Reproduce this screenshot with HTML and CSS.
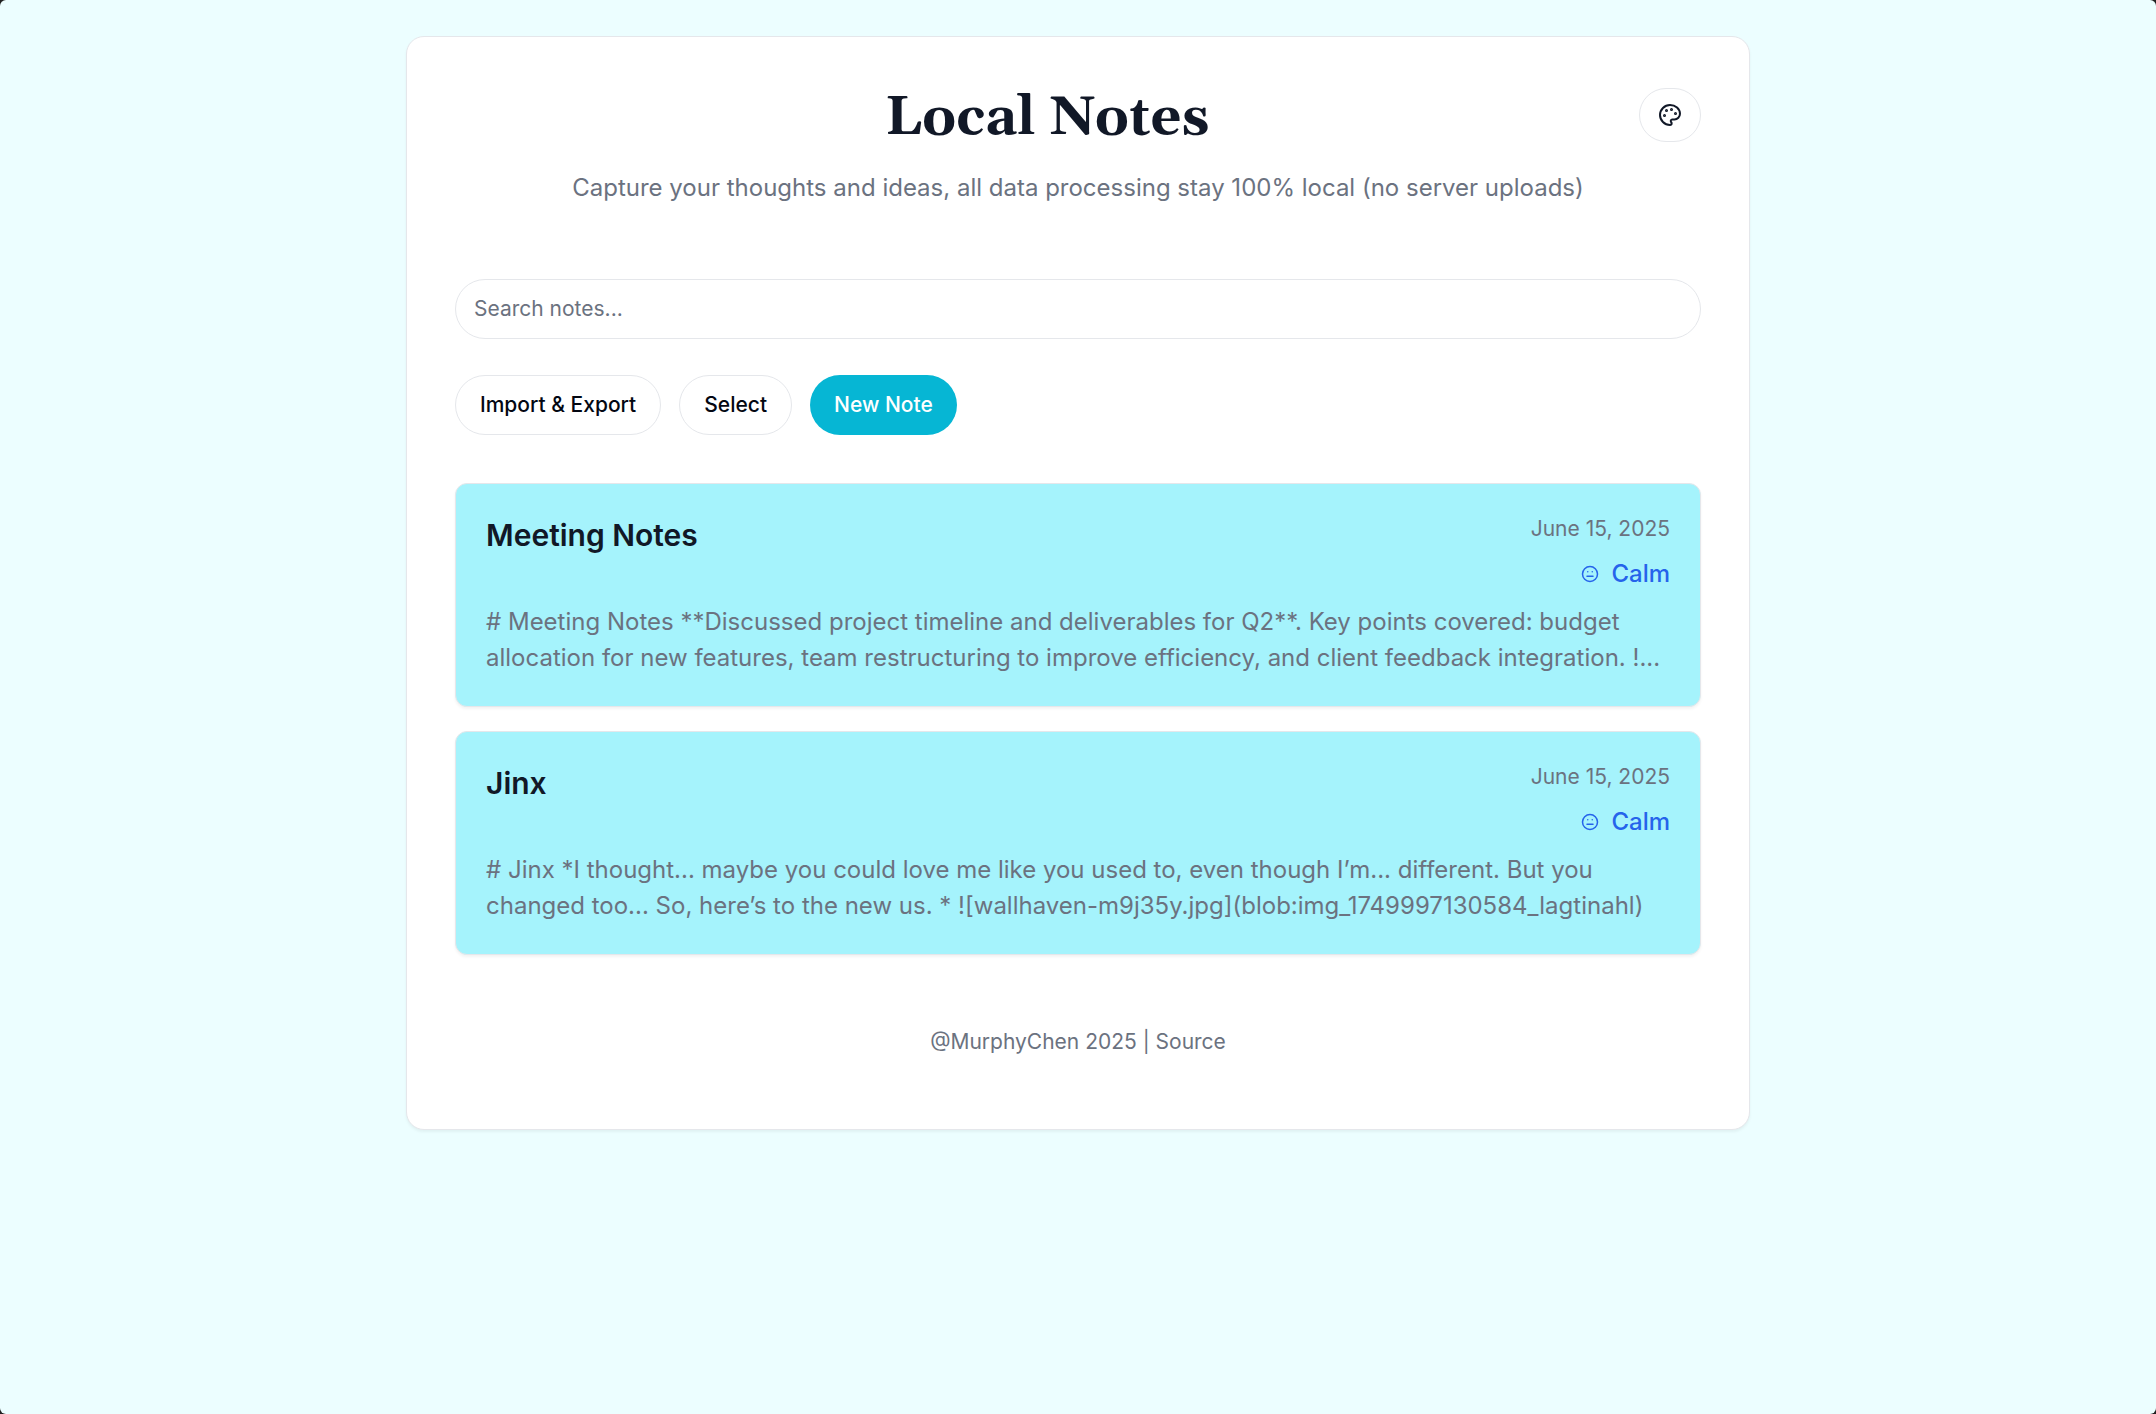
FILE: index.html
```html
<!DOCTYPE html>
<html lang="en">
<head>
<meta charset="utf-8">
<meta name="viewport" content="width=device-width, initial-scale=1">
<title>Local Notes</title>
<link rel="stylesheet" href="styles.css">
</head>
<body>
<div class="panel">
  <header class="header">
    <div class="header-row">
      <h1 class="title">Local Notes</h1>
      <button class="button theme-button" type="button" aria-label="Change theme">
        <svg class="palette" viewBox="0 0 24 24" fill="none" stroke="currentColor" stroke-width="2" stroke-linecap="round" stroke-linejoin="round" aria-hidden="true">
          <circle cx="13.5" cy="6.5" r=".5" fill="currentColor"/>
          <circle cx="17.5" cy="10.5" r=".5" fill="currentColor"/>
          <circle cx="8.5" cy="7.5" r=".5" fill="currentColor"/>
          <circle cx="6.5" cy="12.5" r=".5" fill="currentColor"/>
          <path d="M12 2C6.5 2 2 6.5 2 12s4.5 10 10 10c.926 0 1.648-.746 1.648-1.688 0-.437-.18-.835-.437-1.125-.29-.289-.438-.652-.438-1.125a1.64 1.64 0 0 1 1.668-1.668h1.996c3.051 0 5.555-2.503 5.555-5.554C21.965 6.012 17.461 2 12 2z"/>
        </svg>
      </button>
    </div>
    <p class="subtitle">Capture your thoughts and ideas, all data processing stay 100% local (no server uploads)</p>
  </header>
  <main>
    <input class="search" type="search" placeholder="Search notes..." aria-label="Search notes">
    <div class="toolbar">
      <button class="button" type="button">Import &amp; Export</button>
      <button class="button" type="button">Select</button>
      <button class="button button-primary" type="button">New Note</button>
    </div>
    <div class="notes">
      <article class="note">
        <div class="note-header">
          <h2 class="note-title">Meeting Notes</h2>
          <div class="note-meta">
            <time class="note-date" datetime="2025-06-15">June 15, 2025</time>
            <span class="mood">
              <svg class="mood-icon" viewBox="0 0 24 24" fill="none" stroke="currentColor" stroke-width="2" stroke-linecap="round" stroke-linejoin="round" aria-hidden="true"><circle cx="12" cy="12" r="10"/><path d="M8 15h8M9 9h.01M15 9h.01"/></svg>
              Calm
            </span>
          </div>
        </div>
        <p class="note-text"># Meeting Notes **Discussed project timeline and deliverables for Q2**. Key points covered: budget allocation for new features, team restructuring to improve efficiency, and client feedback integration. !...</p>
      </article>
      <article class="note">
        <div class="note-header">
          <h2 class="note-title">Jinx</h2>
          <div class="note-meta">
            <time class="note-date" datetime="2025-06-15">June 15, 2025</time>
            <span class="mood">
              <svg class="mood-icon" viewBox="0 0 24 24" fill="none" stroke="currentColor" stroke-width="2" stroke-linecap="round" stroke-linejoin="round" aria-hidden="true"><circle cx="12" cy="12" r="10"/><path d="M8 15h8M9 9h.01M15 9h.01"/></svg>
              Calm
            </span>
          </div>
        </div>
        <p class="note-text"># Jinx *I thought... maybe you could love me like you used to, even though I’m... different. But you changed too... So, here’s to the new us. * ![wallhaven-m9j35y.jpg](blob:img_1749997130584_lagtinahl)</p>
      </article>
    </div>
  </main>
  <footer class="footer">@MurphyChen 2025 | <a class="footer-link" href="#source">Source</a></footer>
</div>
</body>
</html>
```
FILE: styles.css
```css
*, *::before, *::after { box-sizing: border-box; }

html { background: #202020; }

body {
  margin: 0;
  min-height: 100vh;
  padding: 36px 24px;
  border-radius: 6px;
  background: #ecfeff;
  color: #111827;
  font-family: Inter, "Liberation Sans", sans-serif;
  font-size: 24px;
  line-height: 36px;
}

h1, h2, p { margin: 0; }

.panel {
  max-width: 1344px;
  margin: 0 auto;
  padding: 48px;
  border: 1px solid #e5e7eb;
  border-radius: 18px;
  background: #fff;
  box-shadow: 0 2px 3px rgb(0 0 0 / 5%);
}

.header { margin-bottom: 73px; text-align: center; }

.header-row {
  display: flex;
  align-items: center;
  margin-bottom: 25px;
}

.title {
  flex: 1;
  padding-top: 6px;
  font-family: Gelasio, "DejaVu Serif", serif;
  font-size: 54px;
  font-weight: 700;
  line-height: 54px;
}

.subtitle, .note-text { color: #6b7280; }

.button {
  height: 60px;
  padding: 0 24px;
  border: 1px solid #e5e7eb;
  border-radius: 30px;
  background: #fff;
  color: #030712;
  font: 500 21px/30px Inter, "Liberation Sans", sans-serif;
}

.button-primary {
  border: 0;
  background: #06b6d4;
  color: #fff;
}

.theme-button {
  display: flex;
  align-items: center;
  justify-content: center;
  width: 62px;
  height: 54px;
  padding: 0;
  color: #111827;
}

.palette { width: 24px; height: 24px; }

.search {
  display: block;
  width: 100%;
  height: 60px;
  padding: 0 18px 2px;
  border: 1px solid #e5e7eb;
  border-radius: 30px;
  background: #fff;
  color: #111827;
  font: 400 21px/30px Inter, "Liberation Sans", sans-serif;
  appearance: none;
}

.search::placeholder { color: #6b7280; opacity: 1; }

.toolbar {
  display: flex;
  flex-wrap: wrap;
  gap: 18px;
  margin: 36px 0 48px;
}

.notes { display: grid; gap: 24px; }

.note {
  padding: 30px;
  border: 1px solid #e5e7eb;
  border-radius: 12px;
  background: #a5f3fc;
  box-shadow: 0 2px 3px rgb(0 0 0 / 5%);
}

.note-header {
  display: flex;
  justify-content: space-between;
  align-items: flex-start;
  margin-bottom: 12px;
}

.note-title {
  font-size: 30px;
  font-weight: 600;
  line-height: 42px;
}

.note-meta {
  display: flex;
  flex-direction: column;
  align-items: flex-end;
  gap: 12px;
}

.note-date {
  color: #6b7280;
  font-size: 21px;
  line-height: 30px;
}

.mood {
  display: flex;
  align-items: center;
  gap: 12px;
  color: #2563eb;
  font-weight: 500;
}

.mood-icon { width: 18px; height: 18px; }

.footer {
  padding: 72px 0 24px;
  color: #6b7280;
  font-size: 21px;
  line-height: 30px;
  text-align: center;
}

.footer-link { color: inherit; text-decoration: none; }
```
